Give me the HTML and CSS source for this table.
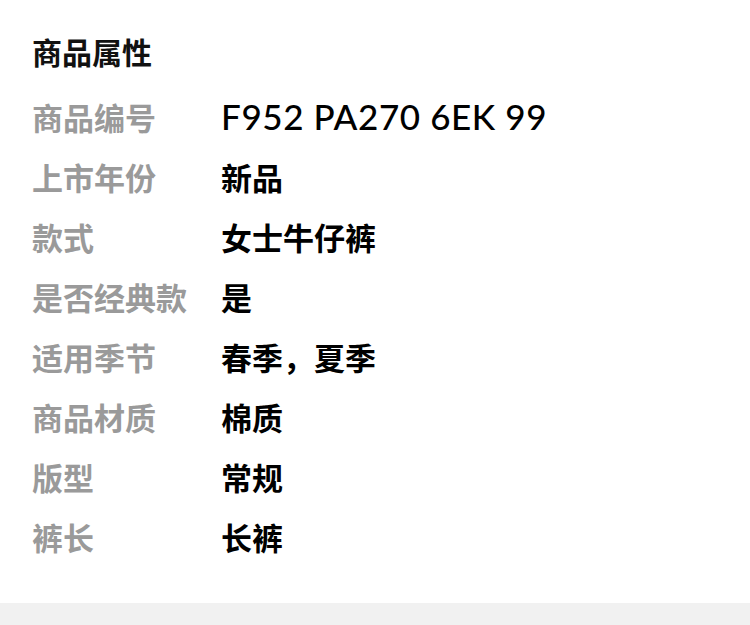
FILE: index.html
```html
<!DOCTYPE html>
<html lang="zh-CN">
<head>
    <meta charset="UTF-8">
    <meta name="viewport" content="width=device-width, initial-scale=1.0">
    <title>商品属性</title>
    <link rel="stylesheet" href="styles.css">
</head>
<body>
    <div class="attr-panel">
        <h1>商品属性</h1>
        <div class="attr-list">
            <div class="attr-row">
                <span class="attr-label">商品编号</span>
                <span class="attr-value code">F952 PA270 6EK 99</span>
            </div>
            <div class="attr-row">
                <span class="attr-label">上市年份</span>
                <span class="attr-value">新品</span>
            </div>
            <div class="attr-row">
                <span class="attr-label">款式</span>
                <span class="attr-value">女士牛仔裤</span>
            </div>
            <div class="attr-row">
                <span class="attr-label">是否经典款</span>
                <span class="attr-value">是</span>
            </div>
            <div class="attr-row">
                <span class="attr-label">适用季节</span>
                <span class="attr-value">春季，夏季</span>
            </div>
            <div class="attr-row">
                <span class="attr-label">商品材质</span>
                <span class="attr-value">棉质</span>
            </div>
            <div class="attr-row">
                <span class="attr-label">版型</span>
                <span class="attr-value">常规</span>
            </div>
            <div class="attr-row">
                <span class="attr-label">裤长</span>
                <span class="attr-value">长裤</span>
            </div>
        </div>
    </div>
    <div class="footer-band"></div>
</body>
</html>
```

FILE: styles.css
```css
body {
    font-family: "Noto Sans CJK SC", "Noto Sans", sans-serif;
    margin: 0;
    background-color: white;
}
.attr-panel {
    padding: 28px 32px 0 32px;
    height: 603px;
    box-sizing: border-box;
}
h1 {
    margin: 0;
    font-size: 30px;
    font-weight: 700;
    color: #111;
    line-height: 46px;
    margin-bottom: 12px;
}
.attr-row {
    display: flex;
    align-items: center;
    height: 60px;
}
.attr-label {
    width: 189px;
    flex-shrink: 0;
    font-size: 31px;
    font-weight: 700;
    color: #9a9a9a;
}
.attr-value {
    font-size: 31px;
    font-weight: 700;
    color: #000;
}
.attr-value.code {
    font-family: "Lato", "Noto Sans", sans-serif;
    font-weight: 500;
    font-size: 35px;
    letter-spacing: 0.6px;
}
.footer-band {
    height: 22px;
    background-color: #f1f1f1;
}
```
